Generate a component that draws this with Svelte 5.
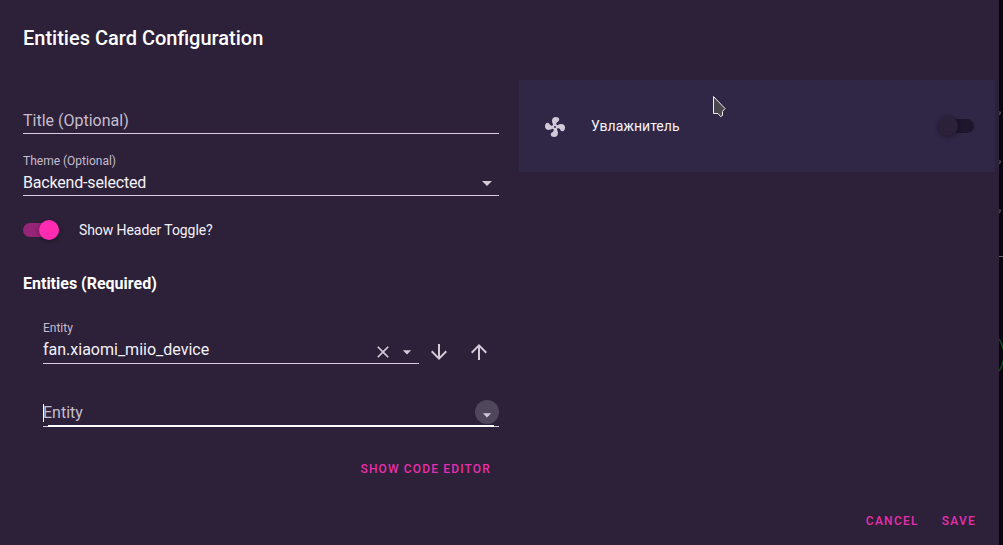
<script>
    let title = "";
    let headerToggle = true;
    let fanOn = false;
</script>

<div class="page">
    <div class="dialog">
        <h2>Entities Card Configuration</h2>

        <div class="content">
            <div class="editor">
                <div class="field title-field">
                    <span class="placeholder">Title (Optional)</span>
                    {title}
                </div>

                <div class="field theme-field">
                    <span class="label">Theme (Optional)</span>
                    <div class="value">
                        <span>Backend-selected</span>
                        <svg class="caret" viewBox="0 0 24 24"><path d="M7 10l5 5 5-5z" /></svg>
                    </div>
                </div>

                <div class="toggle-row">
                    <button
                        class="switch"
                        class:on={headerToggle}
                        aria-label="Show Header Toggle?"
                        on:click={() => (headerToggle = !headerToggle)}
                    >
                        <span class="knob"></span>
                    </button>
                    <span>Show Header Toggle?</span>
                </div>

                <h3>Entities (Required)</h3>

                <div class="entities">
                    <div class="entity-row">
                        <div class="field entity-field">
                            <span class="label">Entity</span>
                            <div class="value">
                                <span>fan.xiaomi_miio_device</span>
                                <div class="field-icons">
                                    <svg viewBox="0 0 24 24"><path d="M19 6.41L17.59 5 12 10.59 6.41 5 5 6.41 10.59 12 5 17.59 6.41 19 12 13.41 17.59 19 19 17.59 13.41 12z" /></svg>
                                    <svg viewBox="0 0 24 24"><path d="M7 10l5 5 5-5z" /></svg>
                                </div>
                            </div>
                        </div>
                        <svg class="arrow" viewBox="0 0 24 24"><path d="M20 12l-1.41-1.41L13 16.17V4h-2v12.17l-5.58-5.59L4 12l8 8 8-8z" /></svg>
                        <svg class="arrow" viewBox="0 0 24 24"><path d="M4 12l1.41 1.41L11 7.83V20h2V7.83l5.58 5.59L20 12l-8-8-8 8z" /></svg>
                    </div>

                    <div class="field new-entity">
                        <span class="text-caret"></span>
                        <span class="placeholder">Entity</span>
                        <span class="ripple">
                            <svg viewBox="0 0 24 24"><path d="M7 10l5 5 5-5z" /></svg>
                        </span>
                        <span class="focus-line"></span>
                    </div>
                </div>

                <div class="code-editor">
                    <button class="action">Show code editor</button>
                </div>
            </div>

            <div class="card">
                <svg class="fan" viewBox="0 0 24 24"><path d="M12,11A1,1 0 0,0 11,12A1,1 0 0,0 12,13A1,1 0 0,0 13,12A1,1 0 0,0 12,11M12.5,2C17,2 17.11,5.57 14.75,6.75C13.76,7.24 13.32,8.29 13.13,9.22C13.61,9.42 14.03,9.73 14.35,10.13C18.05,8.13 22.03,8.92 22.03,12.5C22.03,17 18.46,17.1 17.28,14.73C16.78,13.74 15.72,13.3 14.79,13.11C14.59,13.59 14.28,14 13.88,14.34C15.87,18.03 15.08,22 11.5,22C7,22 6.91,18.42 9.27,17.24C10.25,16.75 10.69,15.71 10.89,14.79C10.4,14.59 9.97,14.27 9.65,13.87C5.96,15.85 2,15.07 2,11.5C2,7 5.56,6.89 6.74,9.26C7.24,10.25 8.29,10.68 9.22,10.87C9.41,10.39 9.73,9.97 10.14,9.65C8.15,5.96 8.94,2 12.5,2Z" /></svg>
                <span class="name">Увлажнитель</span>
                <button
                    class="switch"
                    class:on={fanOn}
                    aria-label="Увлажнитель"
                    on:click={() => (fanOn = !fanOn)}
                >
                    <span class="knob"></span>
                </button>
            </div>
        </div>

        <div class="actions">
            <button class="action">Cancel</button>
            <button class="action">Save</button>
        </div>
    </div>

    <!-- sliver of the dashboard behind the dialog -->
    <svg class="backdrop" viewBox="0 0 4 545">
        <path d="M0 112h1.5l-1 3M0 161h1.5l-1 3M0 210h1.5l-1 3" stroke="#605b62" fill="none" />
        <path d="M0 256.5h4" stroke="#69636c" />
        <path d="M0 339q3 4 4 10M0 371q3-4 4-10" stroke="#06501a" stroke-width="1.5" fill="none" />
    </svg>

    <svg class="pointer" viewBox="0 0 14 22">
        <path d="M1.500 .5v17h4.500l2.500 3 2-1v-4l2.500-3z" />
    </svg>
</div>

<style>
    :global(body) {
        background: #0b0512;
    }

    .page {
        position: relative;
        display: flex;
        width: 1003px;
        height: 545px;
        overflow: hidden;
        font-family: Roboto, "Noto Sans", sans-serif;
        color: #f5f1f8;
    }

    .dialog {
        display: flex;
        flex-direction: column;
        box-sizing: border-box;
        width: 999px;
        padding: 24px 4px 0 23px;
        background: #2c2138;
    }

    h2 {
        margin: 0;
        height: 56px;
        font-size: 20px;
        font-weight: 500;
        line-height: 28px;
        color: #fff;
    }

    .content {
        display: flex;
        align-items: flex-start;
        gap: 20px;
        height: 423px;
    }

    .editor {
        width: 476px;
    }

    .field {
        position: relative;
        box-sizing: border-box;
        border-bottom: 1px solid #d9cce0;
        font-size: 16px;
        line-height: 24px;
    }

    .placeholder {
        color: #c6bdce;
    }

    .label {
        display: block;
        font-size: 12px;
        line-height: 20px;
        color: #c6bdce;
    }

    .value {
        display: flex;
        justify-content: space-between;
        height: 24px;
    }

    svg {
        display: block;
        flex: none;
        fill: #d2c9d9;
    }

    .title-field {
        height: 54px;
        padding-top: 29px;
    }

    .theme-field {
        height: 62px;
        padding-top: 17px;
    }

    .theme-field .value {
        letter-spacing: -0.18px;
    }

    .caret {
        width: 24px;
        height: 24px;
    }

    .toggle-row {
        display: flex;
        align-items: center;
        gap: 20px;
        height: 20px;
        margin-top: 24px;
        font-size: 14px;
        letter-spacing: -0.08px;
    }

    .switch {
        display: flex;
        align-items: center;
        flex: none;
        width: 36px;
        height: 14px;
        padding: 0;
        border: none;
        border-radius: 7px;
        background: #1d162c;
    }

    .switch.on {
        justify-content: flex-end;
        background: #962477;
    }

    .knob {
        width: 20px;
        height: 20px;
        flex: none;
        border-radius: 50%;
        background: #2b2139;
        box-shadow: 0 1px 4px rgba(0, 0, 0, 0.35);
    }

    .on .knob {
        background: #ff2bb1;
    }

    h3 {
        margin: 32px 0 0;
        font-size: 16px;
        font-weight: 700;
        line-height: 24px;
        color: #fff;
    }

    .entities {
        padding-left: 20px;
    }

    .entity-row {
        display: flex;
        align-items: flex-end;
        margin-top: 22px;
    }

    .entity-field {
        width: 376px;
        height: 46px;
    }

    .entity-field .value {
        line-height: 23px;
    }

    .field-icons {
        display: flex;
        gap: 4px;
        padding: 4px 2px 0 0;
    }

    .field-icons svg,
    .ripple svg {
        width: 20px;
        height: 20px;
    }

    .arrow {
        width: 24px;
        height: 24px;
        margin: 0 8px;
    }

    .arrow + .arrow {
        margin-right: 0;
    }

    .new-entity {
        display: flex;
        height: 63px;
        padding-top: 36px;
    }

    .new-entity .placeholder {
        flex: 1;
        padding-top: 1px;
    }

    .text-caret {
        position: absolute;
        left: 0;
        top: 40px;
        width: 1px;
        height: 18px;
        background: #fff;
    }

    .ripple {
        display: flex;
        align-items: flex-end;
        justify-content: center;
        width: 24px;
        height: 24px;
        border-radius: 50%;
        background: #50465b;
    }

    .ripple svg {
        margin-bottom: -1px;
    }

    .focus-line {
        position: absolute;
        left: 5px;
        right: 5px;
        bottom: -1px;
        height: 2px;
        background: #fff;
    }

    .code-editor {
        display: flex;
        justify-content: flex-end;
        padding: 24px 8px 0 0;
    }

    .action {
        padding: 0;
        border: none;
        background: none;
        font-family: inherit;
        font-size: 12px;
        font-weight: 500;
        line-height: 36px;
        letter-spacing: 1.15px;
        text-transform: uppercase;
        color: #e92eac;
    }

    .card {
        display: flex;
        align-items: center;
        box-sizing: border-box;
        width: 476px;
        height: 92px;
        padding: 0 21px 0 24px;
        background: #302645;
        font-size: 14px;
    }

    .fan {
        width: 24px;
        height: 24px;
        margin-top: 2px;
    }

    .name {
        flex: 1;
        margin-left: 24px;
    }

    .actions {
        display: flex;
        justify-content: flex-end;
        gap: 23px;
        padding-right: 19px;
    }

    .actions .action {
        letter-spacing: 1.25px;
    }

    .backdrop {
        width: 4px;
        height: 545px;
    }

    .pointer {
        position: absolute;
        left: 712px;
        top: 96px;
        width: 14px;
        height: 22px;
        fill: #4b484d;
        stroke: #eee;
    }
</style>
